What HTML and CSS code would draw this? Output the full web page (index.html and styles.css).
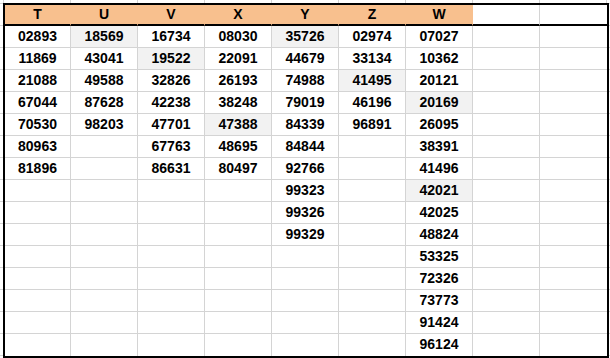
FILE: index.html
```html
<!DOCTYPE html>
<html>
<head>
<meta charset="utf-8">
<link rel="stylesheet" href="styles.css">
</head>
<body>
<div class="sheet">
  <div class="c h">T</div><div class="c h">U</div><div class="c h">V</div><div class="c h">X</div><div class="c h">Y</div><div class="c h">Z</div><div class="c h">W</div><div class="c hx"></div><div class="c hx"></div>

  <div class="c">02893</div><div class="c hl">18569</div><div class="c">16734</div><div class="c">08030</div><div class="c hl">35726</div><div class="c">02974</div><div class="c">07027</div><div class="c"></div><div class="c"></div>
  <div class="c">11869</div><div class="c">43041</div><div class="c hl">19522</div><div class="c">22091</div><div class="c">44679</div><div class="c">33134</div><div class="c">10362</div><div class="c"></div><div class="c"></div>
  <div class="c">21088</div><div class="c">49588</div><div class="c">32826</div><div class="c">26193</div><div class="c">74988</div><div class="c hl">41495</div><div class="c">20121</div><div class="c"></div><div class="c"></div>
  <div class="c">67044</div><div class="c">87628</div><div class="c">42238</div><div class="c">38248</div><div class="c">79019</div><div class="c">46196</div><div class="c hl">20169</div><div class="c"></div><div class="c"></div>
  <div class="c">70530</div><div class="c">98203</div><div class="c">47701</div><div class="c hl">47388</div><div class="c">84339</div><div class="c">96891</div><div class="c">26095</div><div class="c"></div><div class="c"></div>
  <div class="c">80963</div><div class="c"></div><div class="c">67763</div><div class="c">48695</div><div class="c">84844</div><div class="c"></div><div class="c">38391</div><div class="c"></div><div class="c"></div>
  <div class="c">81896</div><div class="c"></div><div class="c">86631</div><div class="c">80497</div><div class="c">92766</div><div class="c"></div><div class="c">41496</div><div class="c"></div><div class="c"></div>
  <div class="c"></div><div class="c"></div><div class="c"></div><div class="c"></div><div class="c">99323</div><div class="c"></div><div class="c hl">42021</div><div class="c"></div><div class="c"></div>
  <div class="c"></div><div class="c"></div><div class="c"></div><div class="c"></div><div class="c">99326</div><div class="c"></div><div class="c">42025</div><div class="c"></div><div class="c"></div>
  <div class="c"></div><div class="c"></div><div class="c"></div><div class="c"></div><div class="c">99329</div><div class="c"></div><div class="c">48824</div><div class="c"></div><div class="c"></div>
  <div class="c"></div><div class="c"></div><div class="c"></div><div class="c"></div><div class="c"></div><div class="c"></div><div class="c">53325</div><div class="c"></div><div class="c"></div>
  <div class="c"></div><div class="c"></div><div class="c"></div><div class="c"></div><div class="c"></div><div class="c"></div><div class="c">72326</div><div class="c"></div><div class="c"></div>
  <div class="c"></div><div class="c"></div><div class="c"></div><div class="c"></div><div class="c"></div><div class="c"></div><div class="c">73773</div><div class="c"></div><div class="c"></div>
  <div class="c"></div><div class="c"></div><div class="c"></div><div class="c"></div><div class="c"></div><div class="c"></div><div class="c">91424</div><div class="c"></div><div class="c"></div>
  <div class="c"></div><div class="c"></div><div class="c"></div><div class="c"></div><div class="c"></div><div class="c"></div><div class="c">96124</div><div class="c"></div><div class="c"></div>
</div>
</body>
</html>
```
FILE: styles.css
```css
html, body {
  height: 100%;
}
body {
  margin: 0;
  padding: 3px 0 0 3px;
  box-sizing: border-box;
  background-color: #ffffff;
  background-image:
    linear-gradient(to right, #d4d4d4 1px, transparent 1px),
    linear-gradient(to bottom, #d4d4d4 1px, transparent 1px);
  background-size: 67px 100%, 100% 22px;
  background-position: 3px 0, 0 3px;
  font-family: "Liberation Sans", Arial, sans-serif;
}
.sheet {
  width: 606px;
  box-sizing: border-box;
  border: 2px solid #000;
  background: #fff;
  display: grid;
  grid-template-columns: 66px repeat(7, 67px) 67px;
  grid-template-rows: 21px repeat(15, 22px);
}
.c {
  box-sizing: border-box;
  border-right: 1px solid #d4d4d4;
  border-bottom: 1px solid #d4d4d4;
  background: #fff;
  color: #000;
  font-weight: bold;
  font-size: 14px;
  line-height: 21px;
  text-align: center;
  white-space: nowrap;
}
.c:nth-child(9n) {
  border-right: 0;
}
.c:nth-last-child(-n+9) {
  border-bottom: 0;
}
.h {
  background: #f8c08e;
  border-right-color: #f8c08e;
  border-bottom: 2px solid #000;
  line-height: 19px;
}
.hx {
  border-bottom: 2px solid #000;
}
.hl {
  background: #f2f2f2;
}
```
